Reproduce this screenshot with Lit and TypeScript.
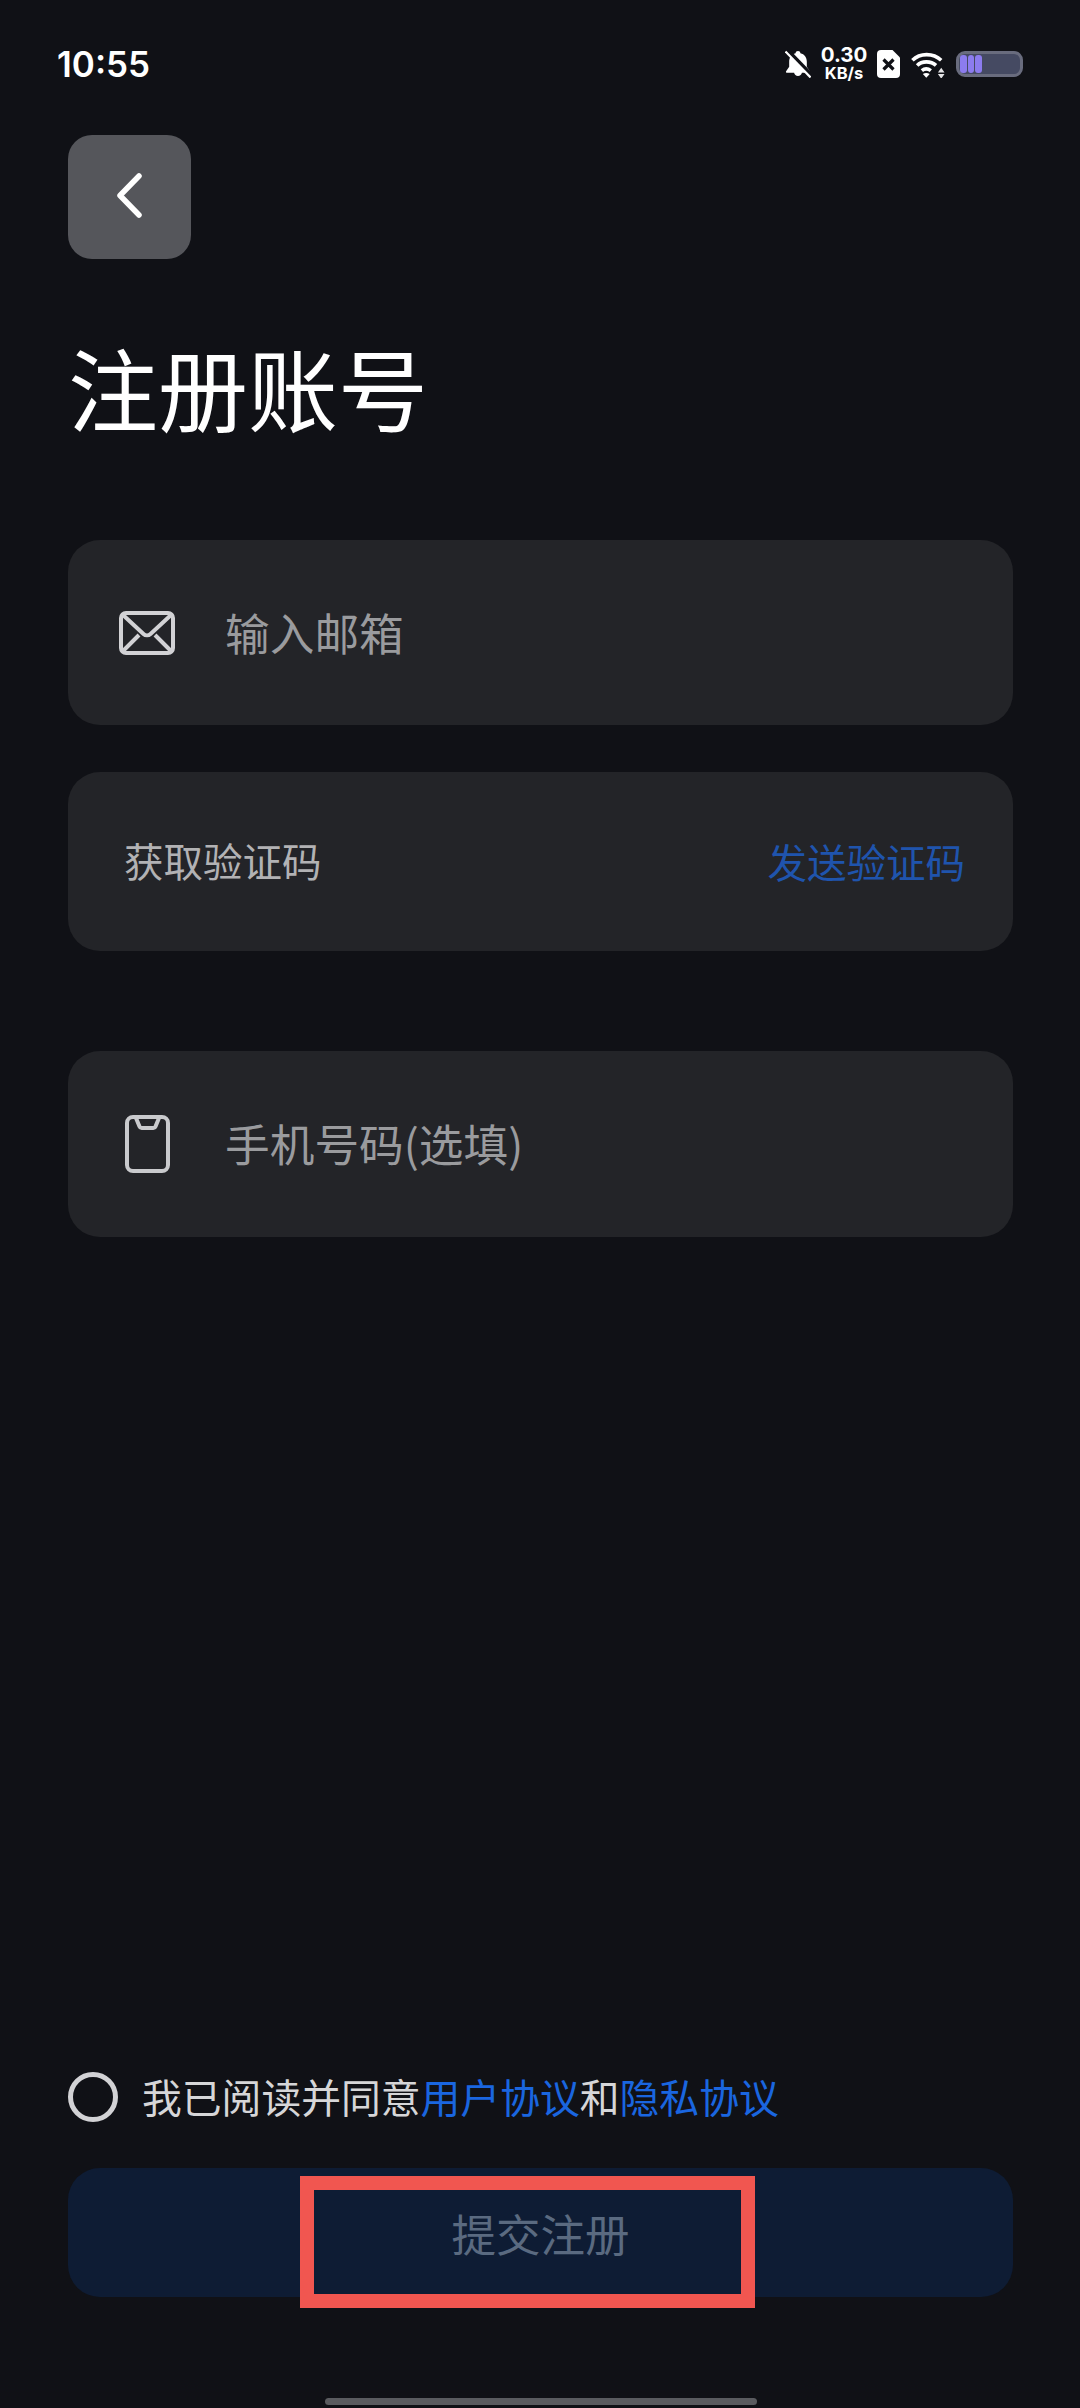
import { LitElement, html, css, svg } from 'lit';
import { customElement } from 'lit/decorators.js';

const bell = svg`<svg viewBox="0 0 28 30" width="26" height="28">
  <path fill="#fff" d="M14 1c1.500 0 2.500 1 2.600 2.300C21 4.300 23.500 7.800 23.500 12.500v5.500l3.300 4.700c.5.800 0 1.800-1 1.800H18.200c-.3 2.100-2 3.500-4.200 3.500s-3.900-1.400-4.200-3.500H2.200c-1 0-1.500-1-1-1.800L4.500 18v-5.500C4.500 7.800 7 4.300 11.400 3.300 11.500 2 12.500 1 14 1z"/>
  <path stroke="#101116" stroke-width="5" d="M1 -1 29 28"/>
  <path stroke="#fff" stroke-width="2.400" d="M0.500 1.500 27.500 29.500"/>
</svg>`;

const sim = svg`<svg viewBox="0 0 23 28" width="23" height="28">
  <path fill="#fff" d="M4 0h11.500L23 7.500V24a4 4 0 0 1-4 4H4a4 4 0 0 1-4-4V4a4 4 0 0 1 4-4z"/>
  <path stroke="#101116" stroke-width="3.200" d="M6.500 9.500l10 10M16.500 9.500l-10 10"/>
</svg>`;

const wifi = svg`<svg viewBox="0 0 36 28" width="34" height="27">
  <g fill="none" stroke="#fff" stroke-width="3.800">
    <path d="M1.500 9.500C9.500 1.500 23.500 1.500 32 9.500"/>
    <path d="M6.500 15C11.500 10 21 10 26.500 15"/>
    <path d="M11.500 20.500c2.800-2.400 6.500-2.400 9.500 0"/>
  </g>
  <path fill="#fff" d="M16.200 28 12.500 24c2.300-1.400 5-1.400 7.300 0z"/>
  <path fill="#e4e4e6" d="M32 17.500l3.500 5h-7zM32 29l-3.500-5h7z"/>
</svg>`;

const mail = svg`<svg viewBox="0 0 56 44" width="56" height="44" fill="none" stroke="#d2d2d5" stroke-width="4">
  <rect x="2" y="2" width="52" height="40" rx="5"/>
  <path d="M4 4 24.500 23c2 1.800 5 1.800 7 0L52 4M4 40l16-16M52 40 36 24"/>
</svg>`;

const phone = svg`<svg viewBox="0 0 45 58" width="45" height="58" fill="none" stroke="#c9cacd" stroke-width="4" stroke-linejoin="round">
  <rect x="2" y="2" width="41" height="54" rx="6"/>
  <path d="M11 3l3.500 8.500c.4 1 1.100 1.500 2.100 1.500h11.800c1 0 1.700-.5 2.100-1.500L34 3"/>
</svg>`;

@customElement('app-root')
export class AppRoot extends LitElement {
  render() {
    return html`
      <div class="page">
        <div class="status">
          <span class="time">10:55</span>
          <div class="status-icons">
            ${bell}
            <div class="speed"><b>0.30</b><b class="unit">KB/s</b></div>
            ${sim}
            ${wifi}
            <div class="battery">
              <span class="cell"></span><span class="cell"></span><span class="cell"></span>
            </div>
          </div>
        </div>

        <button class="back" aria-label="返回">
          <svg viewBox="0 0 25 45" width="25" height="45" fill="none" stroke="#fff" stroke-width="5.500" stroke-linecap="round" stroke-linejoin="round">
            <path d="M22 3 3 22.500 22 42"/>
          </svg>
        </button>

        <h1>注册账号</h1>

        <div class="field first">
          <span class="icon">${mail}</span>
          <span class="hint">输入邮箱</span>
        </div>
        <div class="field code">
          <span class="label">获取验证码</span>
          <span class="send">发送验证码</span>
        </div>
        <div class="field third">
          <span class="icon">${phone}</span>
          <span class="hint">手机号码(选填)</span>
        </div>

        <div class="spacer"></div>

        <div class="agree">
          <span class="radio"></span>
          <span class="agree-text">我已阅读并同意<a>用户协议</a>和<a>隐私协议</a></span>
        </div>

        <div class="submit">
          <span>提交注册</span>
          <div class="mark"></div>
        </div>

        <div class="home"></div>
      </div>
    `;
  }

  static styles = css`
    :host {
      display: block;
      font-family: 'Noto Sans CJK SC', 'Noto Sans', sans-serif;
    }
    .page {
      display: flex;
      flex-direction: column;
      box-sizing: border-box;
      height: 2408px;
      padding: 0 67px 3px 68px;
      background: #101116;
      color: #fff;
    }
    .status {
      display: flex;
      justify-content: space-between;
      align-items: center;
      height: 64px;
      margin: 32px -10px 39px -11px;
    }
    .time {
      font-family: 'Inter', 'Noto Sans', sans-serif;
      font-size: 35px;
      font-weight: 600;
      line-height: 1;
    }
    .status-icons {
      display: flex;
      align-items: center;
      gap: 11px;
    }
    .speed {
      display: flex;
      flex-direction: column;
      align-items: center;
      width: 44px;
      font-family: 'Inter', 'Noto Sans', sans-serif;
      font-size: 20.500px;
      line-height: 18px;
    }
    .speed b { font-weight: 700; }
    .speed .unit { font-size: 16.500px; }
    .battery {
      display: flex;
      gap: 1px;
      box-sizing: border-box;
      width: 67px;
      height: 26px;
      padding: 1px;
      background: #454a62;
      border: 3px solid #696c7e;
      border-radius: 9px;
    }
    .cell {
      width: 6.500px;
      background: #8c7cee;
      border-radius: 3px;
    }
    .back {
      display: flex;
      align-items: center;
      justify-content: center;
      width: 123px;
      height: 124px;
      padding: 0 0 3px;
      background: #55565b;
      border: 0;
      border-radius: 24px;
    }
    .back svg { display: block; }
    h1 {
      height: 124px;
      margin: 65px 0 0;
      font-size: 90px;
      font-weight: 400;
      line-height: 124px;
    }
    .field {
      display: flex;
      align-items: center;
      flex: none;
      padding: 0 46px 0 51px;
      background: #232428;
      border-radius: 32px;
    }
    .first {
      height: 185px;
      margin-top: 92px;
    }
    .code {
      justify-content: space-between;
      height: 179px;
      margin-top: 47px;
      padding: 0 48px 0 56px;
    }
    .third {
      height: 186px;
      margin-top: 100px;
    }
    .icon {
      display: flex;
      justify-content: center;
      width: 56px;
      margin-right: 50px;
    }
    .icon svg { display: block; }
    .hint {
      padding-bottom: 3px;
      font-size: 44.700px;
      color: #9a9b9e;
    }
    .label {
      padding-bottom: 4px;
      font-size: 39.500px;
      color: #b2b2b4;
    }
    .send {
      padding-bottom: 3px;
      font-size: 39.500px;
      color: #1f54ad;
    }
    .spacer { flex: 1; }
    .agree {
      display: flex;
      align-items: center;
      gap: 24px;
      height: 52px;
      margin-bottom: 45px;
      font-size: 39.800px;
      color: #d6d6d8;
    }
    .agree-text { padding-bottom: 4px; }
    .agree a { color: #1a66e0; }
    .radio {
      flex: none;
      box-sizing: border-box;
      width: 50px;
      height: 50px;
      border: 5px solid #d2d2d5;
      border-radius: 50%;
    }
    .submit {
      position: relative;
      display: flex;
      align-items: center;
      justify-content: center;
      flex: none;
      height: 129px;
      background: #0e1c34;
      border-radius: 32px;
      font-size: 44.500px;
      color: #5a6a80;
    }
    /* marker over the button, part of the screenshot */
    .mark {
      position: absolute;
      left: 232px;
      top: 8px;
      box-sizing: border-box;
      width: 455px;
      height: 132px;
      border: 14px solid #f15650;
    }
    .home {
      flex: none;
      align-self: center;
      width: 432px;
      height: 7px;
      margin-top: 101px;
      background: #5a5b5f;
      border-radius: 4px;
    }
  `;
}
